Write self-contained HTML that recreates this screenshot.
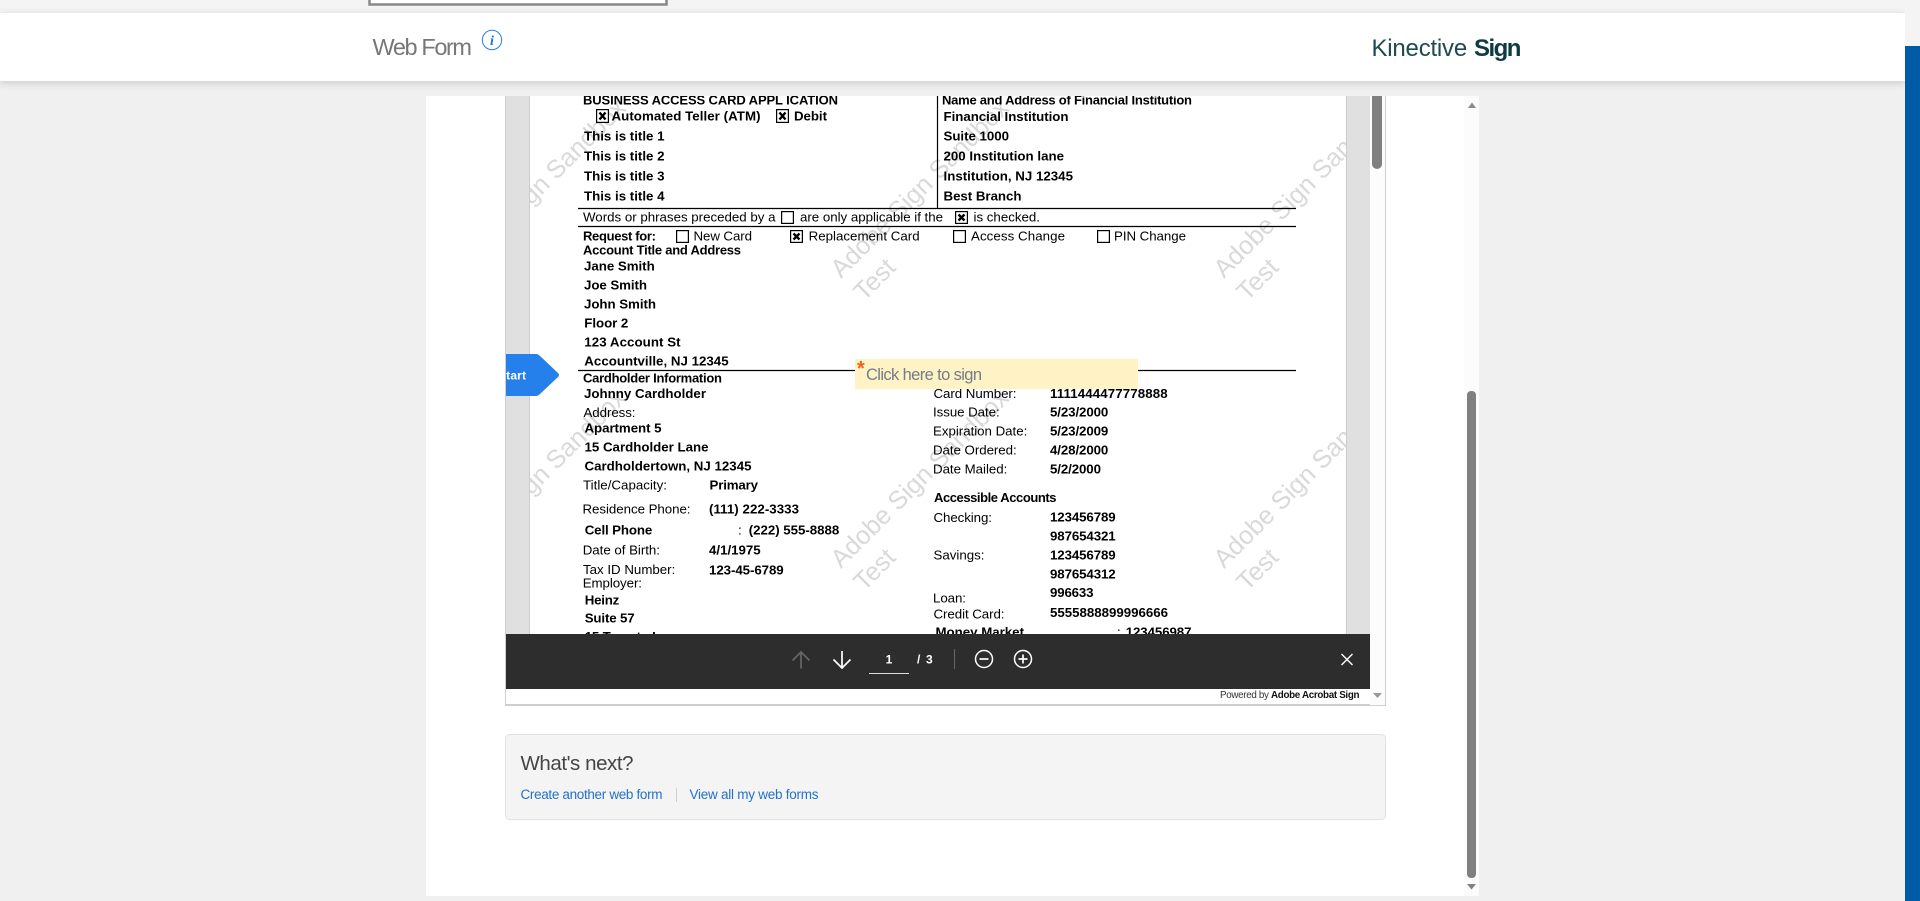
<!DOCTYPE html>
<html lang="en"><head><meta charset="utf-8"><title>Web Form</title>
<style>
html,body{margin:0;padding:0;width:1920px;height:901px;overflow:hidden;background:#f0f0f0}
svg{display:block;position:absolute;left:0;top:0}
text{font-family:"Liberation Sans",Arial,sans-serif;white-space:pre}
.b{font-weight:700;font-size:13.3px;fill:#000}
.h{font-weight:700;font-size:13px;fill:#000}
.r{font-size:13.3px;fill:#000}
.w{font-size:25.5px;fill:#d9d9d9}
</style></head><body>
<svg width="1920" height="901" viewBox="0 0 1920 901" xmlns="http://www.w3.org/2000/svg">
<defs>
<clipPath id="d"><rect x="506" y="96" width="864" height="538"/></clipPath>
<clipPath id="p"><rect x="530" y="96" width="816" height="538"/></clipPath>
<clipPath id="s"><rect x="506" y="340" width="60" height="70"/></clipPath>
<filter id="sh" x="-2%" y="-30%" width="104%" height="160%"><feDropShadow dx="0" dy="2" stdDeviation="4" flood-color="#000" flood-opacity=".16"/></filter>
</defs>
<rect width="1920" height="901" fill="#f0f0f0"/>
<rect x="426" y="96" width="1053" height="800" fill="#fff"/>
<rect x="1464" y="96" width="15" height="800" fill="#fcfcfc"/>
<!-- outer scrollbar -->
<path d="M1468 108h8l-4-5.500z" fill="#8a8a8a"/>
<rect x="1467" y="391" width="9" height="487" rx="4" fill="#808080"/>
<path d="M1467 884h9l-4.500 5.500z" fill="#808080"/>
<!-- doc frame -->
<rect x="505" y="96" width="881" height="609" fill="#fff"/>
<path d="M505.500 96V705M1385.500 96V705" stroke="#cfcfcf" stroke-width="1" fill="none"/>
<rect x="505" y="704" width="881" height="2" fill="#cfcfcf"/>
<rect x="506" y="96" width="24" height="538" fill="#e0e0e0"/>
<rect x="529" y="96" width="1" height="538" fill="#cdcdcd"/>
<rect x="1346" y="96" width="24" height="538" fill="#e0e0e0"/>
<rect x="1346" y="96" width="1" height="538" fill="#cdcdcd"/>
<rect x="1370" y="96" width="15" height="609" fill="#fcfcfc"/>
<path d="M1372 96h10v68a5 5 0 0 1-10 0z" fill="#808080"/>
<path d="M1373 693h9l-4.500 5z" fill="#999"/>
<rect x="530" y="96" width="816" height="538" fill="#fff"/>
<!-- watermarks -->
<g clip-path="url(#p)">
<text class="w" transform="translate(458 279) rotate(-45)">Adobe Sign Sandbox</text><text class="w" transform="translate(481 302) rotate(-45)">Test</text>
<text class="w" transform="translate(841 279) rotate(-45)">Adobe Sign Sandbox</text><text class="w" transform="translate(864 302) rotate(-45)">Test</text>
<text class="w" transform="translate(1224 279) rotate(-45)">Adobe Sign Sandbox</text><text class="w" transform="translate(1247 302) rotate(-45)">Test</text>
<text class="w" transform="translate(458 569) rotate(-45)">Adobe Sign Sandbox</text><text class="w" transform="translate(481 592) rotate(-45)">Test</text>
<text class="w" transform="translate(841 569) rotate(-45)">Adobe Sign Sandbox</text><text class="w" transform="translate(864 592) rotate(-45)">Test</text>
<text class="w" transform="translate(1224 569) rotate(-45)">Adobe Sign Sandbox</text><text class="w" transform="translate(1247 592) rotate(-45)">Test</text>
</g>
<!-- document -->
<g clip-path="url(#d)">
<path d="M578 208.500H1296M578 226.500H1296M578 370.500H1296" stroke="#000" stroke-width="1.300" fill="none"/>
<path d="M937.500 96V208" stroke="#000" stroke-width="1.200" fill="none"/>
<text class="h" x="583" y="104.500" textLength="255">BUSINESS ACCESS CARD APPL ICATION</text>
<text class="b" x="611.500" y="120.500" textLength="149">Automated Teller (ATM)</text>
<text class="b" x="794" y="120.500" textLength="33">Debit</text>
<text class="b" x="584" y="140.500" textLength="80.500">This is title 1</text>
<text class="b" x="584" y="160.500" textLength="80.500">This is title 2</text>
<text class="b" x="584" y="180.500" textLength="80.500">This is title 3</text>
<text class="b" x="584" y="200.500" textLength="80.500">This is title 4</text>
<text class="h" x="942" y="104.500" textLength="250">Name and Address of Financial Institution</text>
<text class="b" x="943.500" y="121" textLength="125">Financial Institution</text>
<text class="b" x="943.500" y="140.500" textLength="65.500">Suite 1000</text>
<text class="b" x="943.500" y="160.500" textLength="120.500">200 Institution lane</text>
<text class="b" x="943.500" y="180.500" textLength="129.500">Institution, NJ 12345</text>
<text class="b" x="943.500" y="200.500" textLength="78">Best Branch</text>
<text class="r" x="583" y="221.500" textLength="192.500">Words or phrases preceded by a</text>
<text class="r" x="800" y="221.500" textLength="143">are only applicable if the</text>
<text class="r" x="973.500" y="221.500" textLength="66.500">is checked.</text>
<text class="h" x="583" y="240.500" textLength="73">Request for:</text>
<text class="r" x="693.500" y="240.500" textLength="58.500">New Card</text>
<text class="r" x="808.600" y="240.500" textLength="111">Replacement Card</text>
<text class="r" x="971" y="240.500" textLength="94">Access Change</text>
<text class="r" x="1114" y="240.500" textLength="72">PIN Change</text>
<text class="h" x="583" y="254.500" textLength="158">Account Title and Address</text>
<text class="b" x="584" y="270.500" textLength="70.700">Jane Smith</text>
<text class="b" x="584" y="289.500" textLength="63">Joe Smith</text>
<text class="b" x="584" y="308.500" textLength="72">John Smith</text>
<text class="b" x="584.300" y="327.500" textLength="44">Floor 2</text>
<text class="b" x="584.300" y="346.500" textLength="96.300">123 Account St</text>
<text class="b" x="584.300" y="365.500" textLength="144.300">Accountville, NJ 12345</text>
<text class="h" x="583" y="382.500" textLength="139">Cardholder Information</text>
<text class="b" x="584" y="398" textLength="122">Johnny Cardholder</text>
<text class="r" x="583.500" y="417" textLength="52">Address:</text>
<text class="b" x="584.500" y="432.500" textLength="77">Apartment 5</text>
<text class="b" x="584.500" y="451.500" textLength="124">15 Cardholder Lane</text>
<text class="b" x="584.500" y="470.500" textLength="167">Cardholdertown, NJ 12345</text>
<text class="r" x="583" y="489.500" textLength="84">Title/Capacity:</text>
<text class="b" x="709.500" y="489.500" textLength="48.500">Primary</text>
<text class="r" x="582.500" y="513.500" textLength="108">Residence Phone:</text>
<text class="b" x="709" y="513.500" textLength="90">(111) 222-3333</text>
<text class="b" x="584.700" y="534.500" textLength="67.600">Cell Phone</text>
<text class="r" x="738" y="534.500">:</text>
<text class="b" x="748.700" y="534.500" textLength="90.600">(222) 555-8888</text>
<text class="r" x="582.700" y="554.500" textLength="77.300">Date of Birth:</text>
<text class="b" x="709" y="554.500" textLength="51.700">4/1/1975</text>
<text class="r" x="583" y="574" textLength="92.300">Tax ID Number:</text>
<text class="b" x="709" y="574.500" textLength="74.700">123-45-6789</text>
<text class="r" x="582.700" y="587.500" textLength="59.300">Employer:</text>
<text class="b" x="584.700" y="604.500" textLength="34.600">Heinz</text>
<text class="b" x="584.700" y="622.500" textLength="50">Suite 57</text>
<text class="b" x="584.700" y="641" textLength="98">15 Tomato Lane</text>
<text class="r" x="933.500" y="398" textLength="83">Card Number:</text>
<text class="b" x="1050" y="398" textLength="117.700">1111444477778888</text>
<text class="r" x="933" y="416.500" textLength="66.700">Issue Date:</text>
<text class="b" x="1050" y="416.500" textLength="58.300">5/23/2000</text>
<text class="r" x="933" y="435.500" textLength="94.300">Expiration Date:</text>
<text class="b" x="1050" y="435.500" textLength="58.300">5/23/2009</text>
<text class="r" x="933" y="454.500" textLength="83.700">Date Ordered:</text>
<text class="b" x="1050" y="454.500" textLength="58.300">4/28/2000</text>
<text class="r" x="933" y="473.500" textLength="74.300">Date Mailed:</text>
<text class="b" x="1050" y="473.500" textLength="51">5/2/2000</text>
<text class="h" x="934" y="502" textLength="122.500">Accessible Accounts</text>
<text class="r" x="933.500" y="522" textLength="58.500">Checking:</text>
<text class="b" x="1050" y="521.500" textLength="65.700">123456789</text>
<text class="b" x="1050" y="540.500" textLength="65.700">987654321</text>
<text class="r" x="933.500" y="559.500" textLength="51">Savings:</text>
<text class="b" x="1050" y="559.500" textLength="65.700">123456789</text>
<text class="b" x="1050" y="578.500" textLength="65.700">987654312</text>
<text class="r" x="933" y="602.500" textLength="33">Loan:</text>
<text class="b" x="1050" y="597" textLength="43.500">996633</text>
<text class="r" x="933.500" y="618.500" textLength="71">Credit Card:</text>
<text class="b" x="1050" y="617" textLength="118">5555888899996666</text>
<text class="b" x="935.500" y="636.500" textLength="88.500">Money Market</text>
<text class="r" x="1117" y="636.500">:</text>
<text class="b" x="1125.700" y="636.500" textLength="65.800">123456987</text>
<!-- checkboxes -->
<g fill="#fff" stroke="#000" stroke-width="1.200">
<rect x="596.600" y="109.600" width="11.800" height="12.800"/>
<rect x="776.600" y="109.600" width="11.800" height="12.800"/>
<rect x="781.600" y="211.600" width="11.800" height="11.800"/>
<rect x="955.600" y="211.600" width="11.800" height="11.800"/>
<rect x="676.600" y="230.600" width="11.800" height="11.800"/>
<rect x="790.600" y="230.600" width="11.800" height="11.800"/>
<rect x="953.600" y="230.600" width="11.800" height="11.800"/>
<rect x="1097.600" y="230.600" width="11.800" height="11.800"/>
</g>
<g stroke="#000" stroke-width="2.400" fill="none">
<path d="M599.500 112.500l6 7M605.500 112.500l-6 7"/>
<path d="M779.500 112.500l6 7M785.500 112.500l-6 7"/>
<path d="M958.500 214.500l6 6M964.500 214.500l-6 6"/>
<path d="M793.500 233.500l6 6M799.500 233.500l-6 6"/>
</g>
</g>
<!-- sign field -->
<rect x="855" y="359" width="283" height="30" fill="#fff3c5"/>
<text x="857" y="375" font-size="20" font-weight="700" fill="#f2601a">*</text>
<text x="866" y="380" font-size="16.500" fill="#727d88" textLength="116">Click here to sign</text>
<!-- start tag -->
<path d="M506 354H536Q538 354 540 356L558 373Q560 375 558 377L540 394Q538 396 536 396H506Z" fill="#2680eb"/>
<g clip-path="url(#s)"><text x="498" y="379.500" font-size="12" font-weight="700" fill="#fff" textLength="28">Start</text></g>
<!-- toolbar -->
<rect x="506" y="634" width="864" height="55" fill="#2d2d2d"/>
<g fill="none" stroke-width="1.700">
<path d="M801 668.500V652M792.500 660.500L801 652L809.500 660.500" stroke="#666"/>
<path d="M842 651V668M833.500 659.500L842 668L850.500 659.500" stroke="#fff"/>
<path d="M869 673.500H909" stroke="#ddd" stroke-width="1"/>
<path d="M954.500 649V669" stroke="#666" stroke-width="1"/>
<circle cx="984" cy="659" r="8.500" stroke="#fff" stroke-width="1.500"/>
<path d="M979.500 659H988.500" stroke="#fff"/>
<circle cx="1023" cy="659" r="8.500" stroke="#fff" stroke-width="1.500"/>
<path d="M1018.500 659H1027.500M1023 654.500V663.500" stroke="#fff"/>
<path d="M1341.500 654L1352.500 665M1352.500 654L1341.500 665" stroke="#fff" stroke-width="1.400"/>
</g>
<text x="889" y="663.500" font-size="12" font-weight="700" fill="#fff" text-anchor="middle">1</text>
<text x="917" y="663.500" font-size="12" font-weight="700" fill="#fff">/</text>
<text x="926" y="663.500" font-size="12" font-weight="700" fill="#fff">3</text>
<text x="1220" y="698" font-size="9.800" fill="#333" textLength="139.500">Powered by <tspan font-weight="700" fill="#111">Adobe Acrobat Sign</tspan></text>
<!-- what's next -->
<rect x="505.500" y="734.500" width="880" height="85" rx="4" fill="#f4f4f4" stroke="#e2e2e2"/>
<text x="520.500" y="770" font-size="20.500" fill="#444" textLength="113">What's next?</text>
<text x="520.500" y="799" font-size="13.500" fill="#2272cc" textLength="142">Create another web form</text>
<path d="M676.500 788V802" stroke="#cfcfcf"/>
<text x="689.500" y="799" font-size="13.500" fill="#2272cc" textLength="129">View all my web forms</text>
<!-- top bar -->
<rect width="1905" height="13" fill="#f4f4f4"/>
<path d="M369.500 0V4.500H666.500V0" fill="#fff" stroke="#888" stroke-width="2.500"/>
<rect y="13" width="1905" height="68" fill="#fff" filter="url(#sh)"/>
<rect x="1905" width="15" height="46" fill="#f4f4f4"/>
<rect x="1905" y="46" width="15" height="855" fill="#005ba6"/>
<text x="372.500" y="55" font-size="23.500" fill="#777" textLength="99.500">Web Form</text>
<circle cx="492" cy="40" r="9.700" fill="#fff" stroke="#2680eb" stroke-width="1"/>
<text x="492" y="45" font-size="14" font-weight="700" font-style="italic" fill="#1473e6" text-anchor="middle" style="font-family:'Liberation Serif',serif">i</text>
<text x="1371.500" y="56" font-size="24" fill="#1f4a50" textLength="95.700">Kinective</text>
<text x="1474" y="56" font-size="24" font-weight="700" fill="#0e3b42" textLength="47.400">Sign</text>
</svg>
</body></html>
